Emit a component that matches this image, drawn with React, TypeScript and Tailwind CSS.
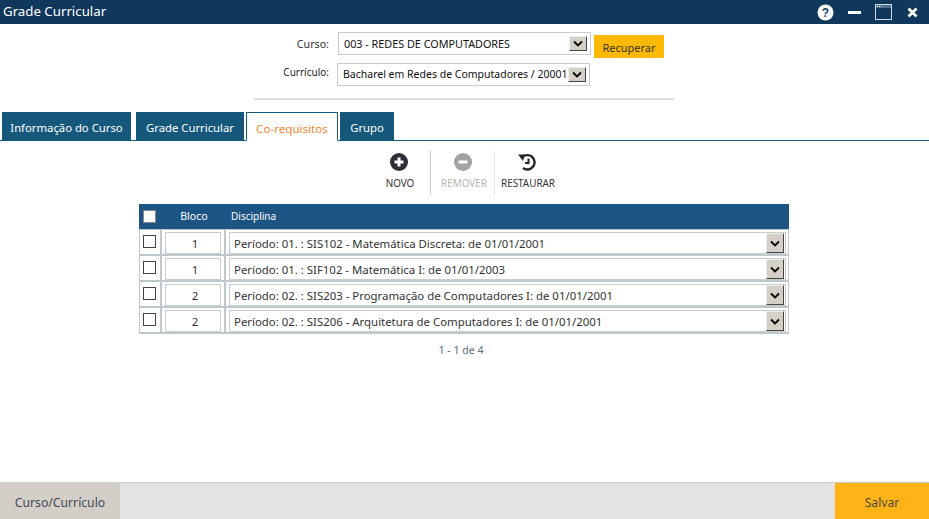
import React from "react";

const F = "font-['Noto_Sans','Open_Sans',sans-serif]";

function Arrow({ big }: { big?: boolean }) {
  return (
    <span className={`flex w-[18px] shrink-0 items-center justify-center border border-t-[#eeeeee] border-l-[#eeeeee] border-r-[#444444] border-b-[#444444] bg-[#d4d0c8] ${big ? "h-[20px]" : "h-[15px]"}`}>
      <svg width="10" height="7" viewBox="0 0 10 7" fill="none">
        <path d="M1 1.5 L5 5.5 L9 1.5" stroke="#000" strokeWidth="1.8" />
      </svg>
    </span>
  );
}

function Row({ bloco, text }: { bloco: string; text: string }) {
  return (
    <div className="box-border flex h-[26px] border-b-[2px] border-[#bcc8cc]">
      <div className="w-[23px] shrink-0 border-l border-r-[2px] border-l-[#bcc8cc] border-r-[#bcc8cc] pl-[3px] pt-[5px]">
        <div className="h-[13px] w-[13px] border border-[#444444] bg-white" />
      </div>
      <div className="w-[64px] shrink-0 border-r-[2px] border-r-[#bcc8cc] px-[3px] pt-[2px]">
        <div className="h-[22px] border border-[#cccccc] pl-[4px] text-center text-[11.5px] leading-[22px] text-[#333333]">{bloco}</div>
      </div>
      <div className="flex-1 border-r border-r-[#bcc8cc] pl-[3px] pr-[2px] pt-[2px]">
        <div className="flex h-[22px] items-center justify-between border border-[#cccccc] pl-[4px] pr-[1px]">
          <span className="whitespace-nowrap pt-[1px] text-[11.4px] text-[#333333]">{text}</span>
          <Arrow big />
        </div>
      </div>
    </div>
  );
}

function Tool({ label, disabled, children }: { label: string; disabled?: boolean; children: React.ReactNode }) {
  return (
    <div className={`flex w-[63px] flex-col items-center pt-[2px] ${disabled ? "text-[#b5b5b5]" : "text-[#333333]"}`}>
      <div className="h-[20px]">{children}</div>
      <span className="mt-[2px] whitespace-nowrap pl-[3px] text-[9.9px] leading-[16px]">{label}</span>
    </div>
  );
}

function Tab({ label, width, active }: { label: string; width: string; active?: boolean }) {
  return active ? (
    <div className={`${width} relative z-10 -mb-px h-[29px] border border-[#15587c] border-b-white bg-white text-center text-[11.6px] leading-[31px] text-[#f58634]`}>
      {label}
    </div>
  ) : (
    <div className={`${width} h-[28px] bg-[#15587c] text-center text-[11.3px] leading-[32px] text-white`}>{label}</div>
  );
}

export default function App() {
  return (
    <div className={`${F} relative flex h-[519px] w-[929px] flex-col overflow-hidden bg-white`}>
      <header className="flex h-[24px] shrink-0 items-center justify-between bg-[#10375c] pl-[3px] pr-[11px]">
        <span className="text-[13.25px] text-white">Grade Curricular</span>
        <div className="flex items-center">
          <svg width="17" height="17" viewBox="0 0 17 17" className="mr-[14px]">
            <circle cx="8.5" cy="8.5" r="8" fill="#fff" />
            <text x="8.5" y="13" textAnchor="middle" fontSize="12" fontWeight="700" fill="#10375c" fontFamily="Liberation Sans">?</text>
          </svg>
          <div className="mr-[14px] h-[3px] w-[13px] bg-white" />
          <svg width="17" height="16" viewBox="0 0 17 16" className="mr-[15px]">
            <rect x="0.5" y="0.5" width="16" height="15" fill="none" stroke="#cfd8e0" />
            <rect x="1" y="1" width="15" height="3" fill="#4f6f8c" />
            <path d="M2 2.5 H3 M4 2.5 H5 M6 2.5 H7" stroke="#e4eaf0" />
          </svg>
          <svg width="11" height="11" viewBox="0 0 11 11">
            <path d="M1.5 1.5 L9.5 9.5 M9.5 1.5 L1.5 9.5" stroke="#fff" strokeWidth="2.8" />
          </svg>
        </div>
      </header>

      <div className="mt-[8px] flex h-[23px] items-start">
        <span className="w-[329px] pt-[4px] text-right text-[10.7px] leading-[16px] text-[#333333]">Curso:</span>
        <div className="ml-[9px] flex h-[23px] w-[253px] items-center justify-between border border-[#cccccc] pl-[5px] pr-[3px]">
          <span className="pt-[1px] text-[10.8px] text-[#111111]">003 - REDES DE COMPUTADORES</span>
          <Arrow />
        </div>
        <div className="ml-[3px] mt-[3px] h-[23px] w-[70px] bg-[#ffb900] text-center text-[11px] leading-[26px] text-[#333333]">Recuperar</div>
      </div>
      <div className="mt-[8px] flex h-[23px] items-start">
        <span className="w-[329px] pt-[1px] text-right text-[10px] leading-[16px] text-[#222222]">Currículo:</span>
        <div className="ml-[8px] flex h-[23px] w-[253px] items-center justify-between border border-[#cccccc] pl-[5px] pr-[3px]">
          <span className="whitespace-nowrap text-[10.5px] text-[#111111]">Bacharel em Redes de Computadores / 20001</span>
          <Arrow />
        </div>
      </div>

      <div className="ml-[254px] mt-[12px] h-[2px] w-[420px] bg-[#dddddd]" />

      <div className="mt-[12px] flex gap-[5px] border-b border-[#15587c] pl-[2px]">
        <Tab label="Informação do Curso" width="w-[129px]" />
        <Tab label="Grade Curricular" width="w-[108px]" />
        <div className="-ml-[3px]"><Tab label="Co-requisitos" width="w-[92px]" active /></div>
        <div className="-ml-[3px]"><Tab label="Grupo" width="w-[54px]" /></div>
      </div>

      <div className="ml-[367px] mt-[10px] flex h-[44px]">
        <Tool label="NOVO">
          <svg width="18" height="18" viewBox="0 0 18 18">
            <circle cx="9" cy="9" r="9" fill="#2b2f36" />
            <path d="M9 4.5 V13.5 M4.5 9 H13.5" stroke="#fff" strokeWidth="3" />
          </svg>
        </Tool>
        <div className="w-px bg-[#cccccc]" />
        <Tool label="REMOVER" disabled>
          <svg width="18" height="18" viewBox="0 0 18 18">
            <circle cx="9" cy="9" r="9" fill="#a3a3a3" />
            <path d="M4.5 9 H13.5" stroke="#fff" strokeWidth="3" />
          </svg>
        </Tool>
        <div className="w-px bg-[#e2e2e2]" />
        <Tool label="RESTAURAR">
          <svg width="20" height="18" viewBox="0 0 20 18" fill="none">
            <path d="M5 4.5 A7.2 7.2 0 1 1 6 15" stroke="#23272e" strokeWidth="2.4" />
            <path d="M1 1.5 L8 1.5 L6 8 Z" fill="#23272e" />
            <path d="M11.5 5.5 V10 H8" stroke="#23272e" strokeWidth="2" />
          </svg>
        </Tool>
      </div>

      <div className="ml-[139px] mt-[9px] w-[650px]">
        <div className="flex h-[26px] items-center border-b border-[#bcc8cc] bg-[#1c5484] text-white">
          <div className="ml-[4px] h-[13px] w-[13px] border border-[#888888] bg-white" />
          <span className="ml-[13px] w-[50px] text-center text-[10.6px]">Bloco</span>
          <span className="ml-[12px] text-[10px]">Disciplina</span>
        </div>
        <Row bloco="1" text="Período: 01. : SIS102 - Matemática Discreta: de 01/01/2001" />
        <Row bloco="1" text="Período: 01. : SIF102 - Matemática I: de 01/01/2003" />
        <Row bloco="2" text="Período: 02. : SIS203 - Programação de Computadores I: de 01/01/2001" />
        <Row bloco="2" text="Período: 02. : SIS206 - Arquitetura de Computadores I: de 01/01/2001" />
        <div className="mt-[8px] pr-[6px] text-center text-[10.6px] leading-[16px] text-[#5a6e7e]">1 - 1 de 4</div>
      </div>

      <footer className="mt-auto flex h-[37px] shrink-0 border-t border-[#cccccc] bg-[#e3e3e3] text-[12.2px] text-[#3f4a55]">
        <div className="flex w-[120px] items-center justify-center bg-[#d3cfc8] pt-[5px]">Curso/Currículo</div>
        <div className="flex-1" />
        <div className="flex w-[94px] items-center justify-center bg-[#ffb316] pt-[5px] text-[#4d4a3a]">Salvar</div>
      </footer>
    </div>
  );
}
